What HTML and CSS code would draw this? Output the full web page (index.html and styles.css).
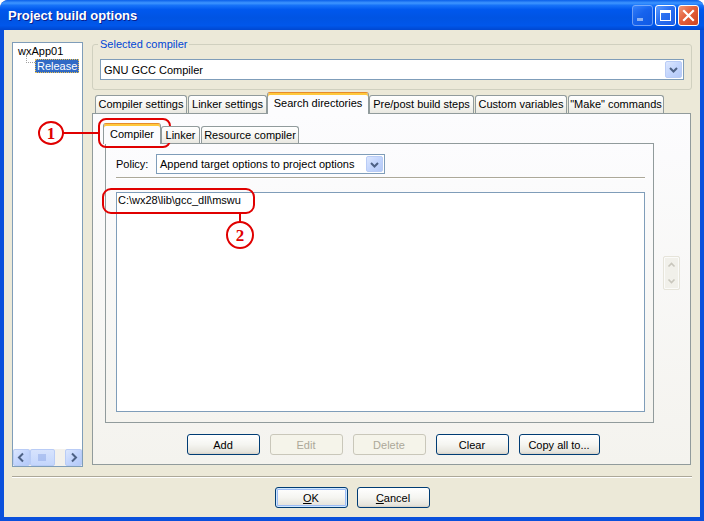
FILE: index.html
```html
<!DOCTYPE html>
<html>
<head>
<meta charset="utf-8">
<link rel="stylesheet" href="styles.css">
</head>
<body>
<div class="window">
  <div class="titlebar">
    <span class="title">Project build options</span>
    <div class="caps">
      <span class="cap cap-min"><i class="min-glyph"></i></span>
      <span class="cap cap-max"><i class="max-glyph"></i></span>
      <span class="cap cap-close"><svg width="13" height="13" viewBox="0 0 13 13"><path d="M2 2 L11 11 M11 2 L2 11" stroke="#fff" stroke-width="2.2" stroke-linecap="square"/></svg></span>
    </div>
  </div>
  <div class="client">
    <div class="main">
      <div class="tree">
        <div class="tree-items">
          <div class="node root">wxApp01</div>
          <div class="node child"><span class="conn"></span><span class="sel">Release</span></div>
        </div>
        <div class="hscroll">
          <span class="sbtn"><svg width="15" height="15" viewBox="0 0 15 15"><path d="M9 3.5 L5 7.5 L9 11.5" fill="none" stroke="#4D6185" stroke-width="2"/></svg></span>
          <span class="thumb"><svg width="9" height="7" viewBox="0 0 9 7"><path d="M1 0 V7 M3 0 V7 M5 0 V7 M7 0 V7" stroke="#8CA6E6" stroke-width="1"/></svg></span>
          <span class="track"></span>
          <span class="sbtn"><svg width="15" height="15" viewBox="0 0 15 15"><path d="M6 3.5 L10 7.5 L6 11.5" fill="none" stroke="#4D6185" stroke-width="2"/></svg></span>
        </div>
      </div>
      <div class="right">
        <fieldset class="group">
          <legend>Selected compiler</legend>
          <div class="combo">
            <span class="combo-text">GNU GCC Compiler</span>
            <span class="combo-btn"><svg width="15" height="15" viewBox="0 0 15 15"><path d="M4 6 L7.5 9.5 L11 6" fill="none" stroke="#4D6185" stroke-width="2"/></svg></span>
          </div>
        </fieldset>
        <div class="notebook">
          <div class="tabs">
            <span class="tab t-cs">Compiler settings</span>
            <span class="tab t-ls">Linker settings</span>
            <span class="tab active t-sd">Search directories</span>
            <span class="tab t-pp">Pre/post build steps</span>
            <span class="tab t-cv">Custom variables</span>
            <span class="tab t-mc">"Make" commands</span>
          </div>
          <div class="page">
            <div class="page-row">
              <div class="inb">
                <div class="itabs">
                  <span class="itab active t-co">Compiler</span>
                  <span class="itab t-li">Linker</span>
                  <span class="itab t-rc">Resource compiler</span>
                </div>
                <div class="ipage">
                  <div class="policy-row">
                    <span class="lbl">Policy:</span>
                    <div class="combo policy">
                      <span class="combo-text">Append target options to project options</span>
                      <span class="combo-btn"><svg width="15" height="15" viewBox="0 0 15 15"><path d="M4 6 L7.5 9.5 L11 6" fill="none" stroke="#4D6185" stroke-width="2"/></svg></span>
                    </div>
                  </div>
                  <div class="hline"></div>
                  <div class="listbox">
                    <div class="item">C:\wx28\lib\gcc_dll\mswu</div>
                  </div>
                </div>
              </div>
              <div class="spin">
                <span class="spin-half"><svg width="9" height="6" viewBox="0 0 9 6"><path d="M1.5 4.5 L4.5 1.5 L7.5 4.5" fill="none" stroke="#C8C6BC" stroke-width="1.6"/></svg></span>
                <span class="spin-half"><svg width="9" height="6" viewBox="0 0 9 6"><path d="M1.5 1.5 L4.5 4.5 L7.5 1.5" fill="none" stroke="#C8C6BC" stroke-width="1.6"/></svg></span>
              </div>
            </div>
            <div class="btnrow">
              <button class="btn">Add</button>
              <button class="btn" disabled>Edit</button>
              <button class="btn" disabled>Delete</button>
              <button class="btn">Clear</button>
              <button class="btn wide">Copy all to...</button>
            </div>
          </div>
        </div>
      </div>
    </div>
    <div class="sep"></div>
    <div class="dlg-btns">
      <button class="btn default"><u>O</u>K</button>
      <button class="btn"><u>C</u>ancel</button>
    </div>
  </div>
  <svg class="annot" width="704" height="521" viewBox="0 0 704 521">
    <g fill="none" stroke="#E00000" stroke-width="2">
      <ellipse cx="51" cy="133" rx="12" ry="11"/>
      <line x1="63" y1="133" x2="99" y2="133"/>
      <rect x="99" y="119" width="71" height="28" rx="7"/>
      <rect x="103" y="189" width="151" height="24" rx="8"/>
      <line x1="240" y1="213" x2="240" y2="222"/>
      <ellipse cx="240" cy="235" rx="13" ry="13"/>
    </g>
    <text x="51" y="139" class="num">1</text>
    <text x="240" y="241" class="num">2</text>
  </svg>
</div>
</body>
</html>
```
FILE: styles.css
```css
* { box-sizing: border-box; }
body {
  margin: 0;
  font-family: "Liberation Sans", Arial, sans-serif;
  font-size: 11px;
  color: #000;
  background: #fff;
}
.window {
  position: relative;
  width: 704px;
  height: 521px;
  background: #0A50DC;
  border-radius: 8px 8px 0 0;
  display: flex;
  flex-direction: column;
  overflow: hidden;
}
.titlebar {
  height: 30px;
  display: flex;
  align-items: center;
  padding: 0 5px 0 8px;
  border-radius: 8px 8px 0 0;
  background: linear-gradient(to bottom, #0A5FEA 0%, #3E96FF 10%, #1672F8 18%, #0058EE 32%, #0054E3 60%, #0057EB 85%, #0047D0 100%);
}
.title {
  flex: 1;
  color: #fff;
  font-weight: bold;
  font-size: 13px;
  text-shadow: 1px 1px 0 #0A1E8C;
  padding-top: 1px;
}
.caps { display: flex; gap: 2px; }
.cap {
  width: 21px;
  height: 21px;
  border: 1px solid #fff;
  border-radius: 3px;
  display: flex;
  align-items: center;
  justify-content: center;
  background: linear-gradient(135deg, #5C9BFF 0%, #2A6FF0 45%, #1C5EE6 100%);
}
.cap-min {
  opacity: 0.55;
  border-color: #C8DAFF;
}
.min-glyph {
  width: 6px;
  height: 3px;
  background: #fff;
  margin-top: 9px;
  margin-left: -5px;
}
.max-glyph {
  width: 11px;
  height: 11px;
  border: 1px solid #fff;
  border-top-width: 3px;
}
.cap-close {
  background: linear-gradient(135deg, #F29878 0%, #E35F3A 45%, #CD4420 100%);
}
.client {
  flex: 1;
  margin: 0 4px 4px;
  background: #ECE9D8;
  display: flex;
  flex-direction: column;
}
.main {
  height: 437px;
  display: flex;
  padding: 8px 8px 0 8px;
  gap: 9px;
}
.tree {
  width: 71px;
  margin-top: 4px;
  border: 1px solid #7F9DB9;
  background: #fff;
  display: flex;
  flex-direction: column;
}
.tree-items {
  flex: 1;
  padding: 1px 0 0 5px;
}
.node { height: 14px; line-height: 14px; white-space: nowrap; }
.child { display: flex; align-items: flex-start; }
.conn {
  width: 9px;
  height: 8px;
  margin-left: 8px;
  margin-top: -3px;
  border-left: 1px dotted #A0A0A0;
  border-bottom: 1px dotted #A0A0A0;
}
.sel {
  background: #316AC5;
  color: #fff;
  padding: 0 1px;
  height: 14px;
  line-height: 12px;
  border: 1px dotted #E8C050;
  margin-top: 1px;
}
.hscroll {
  height: 17px;
  display: flex;
  background: #F3F1EC;
}
.sbtn, .combo-btn {
  width: 17px;
  height: 17px;
  border: 1px solid #B9CCF6;
  border-radius: 2px;
  background: linear-gradient(135deg, #DCE7FE 0%, #C3D5FD 50%, #B4C9F7 100%);
  display: flex;
  align-items: center;
  justify-content: center;
}
.thumb {
  width: 25px;
  height: 17px;
  border: 1px solid #B9CCF6;
  border-radius: 2px;
  background: linear-gradient(#D7E3FD, #C4D6FC);
  display: flex;
  align-items: center;
  justify-content: center;
}
.track { flex: 1; }
.right {
  flex: 1;
  display: flex;
  flex-direction: column;
}
.group {
  margin: 0;
  border: 1px solid #D0D0BF;
  border-radius: 3px;
  padding: 8px 7px 9px 7px;
}
.group legend {
  color: #0046D5;
  padding: 0 2px;
  margin-left: -2px;
  line-height: 13px;
}
.combo {
  height: 21px;
  display: flex;
  align-items: center;
  border: 1px solid #7F9DB9;
  background: #fff;
  padding-right: 1px;
}
.combo-text {
  flex: 1;
  padding-left: 3px;
  white-space: nowrap;
}
.notebook {
  flex: 1;
  margin: 2px 1px 2px 0;
  display: flex;
  flex-direction: column;
}
.tabs, .itabs {
  display: flex;
  align-items: flex-end;
  gap: 1px;
  position: relative;
  z-index: 1;
}
.tabs { height: 21px; padding-left: 3px; }
.itabs { height: 20px; padding-left: 0; }
.tab, .itab {
  height: 18px;
  border: 1px solid #919B9C;
  border-bottom: 0;
  border-radius: 3px 3px 0 0;
  background: linear-gradient(#FFFFFF, #F6F6F2 55%, #E9E8E1);
  text-align: center;
  line-height: 17px;
  white-space: nowrap;
}
.itab { height: 17px; line-height: 16px; }
.tab.active, .itab.active {
  height: 22px;
  margin: 0 -1px -1px -1px;
  background: #FCFCFE;
  border-top: 1px solid #E68B2C;
  box-shadow: inset 0 2px 0 #FFC83C;
  padding-top: 1px;
  line-height: 18px;
}
.itab.active { height: 21px; margin: 0 -1px -1px -2px; }
.t-cs { width: 92px; }
.t-ls { width: 79px; }
.t-sd { width: 102px; }
.t-pp { width: 105px; }
.t-cv { width: 92px; }
.t-mc { width: 96px; }
.t-co { width: 58px; }
.t-li { width: 39px; }
.t-rc { width: 98px; }
.page {
  flex: 1;
  border: 1px solid #919B9C;
  background: linear-gradient(#FCFCFE, #F4F3EE);
  padding: 9px 9px 0 12px;
  display: flex;
  flex-direction: column;
}
.page-row {
  display: flex;
  align-items: center;
  gap: 9px;
}
.inb {
  width: 549px;
  display: flex;
  flex-direction: column;
}
.ipage {
  height: 280px;
  border: 1px solid #919B9C;
  background: linear-gradient(#FCFCFE, #F5F4EF);
  padding: 10px 8px 10px 10px;
  display: flex;
  flex-direction: column;
}
.policy-row {
  display: flex;
  align-items: center;
  height: 20px;
}
.lbl { width: 40px; }
.combo.policy { width: 229px; height: 20px; }
.combo.policy .combo-btn { height: 16px; }
.hline {
  margin-top: 3px;
  height: 2px;
  border-top: 1px solid #ACA899;
  border-bottom: 1px solid #fff;
}
.listbox {
  margin-top: 13px;
  flex: 1;
  border: 1px solid #7F9DB9;
  background: #fff;
  padding: 1px;
}
.item { line-height: 13px; }
.spin {
  width: 17px;
  height: 34px;
  border: 1px solid #E6E4DA;
  border-radius: 2px;
  background: #F1F0EA;
  display: flex;
  flex-direction: column;
  box-shadow: inset 0 0 0 1px #FBFBF9;
}
.spin-half {
  flex: 1;
  display: flex;
  align-items: center;
  justify-content: center;
}
.btnrow {
  margin-top: 11px;
  display: flex;
  justify-content: center;
  gap: 10px;
}
.btn {
  width: 73px;
  height: 21px;
  font-family: "Liberation Sans", Arial, sans-serif;
  font-size: 11px;
  font-weight: normal;
  color: #000;
  border: 1px solid #003C74;
  border-radius: 3px;
  background: linear-gradient(#FFFFFF 0%, #F5F5F1 50%, #E6E4DC 90%, #D6D0C5 100%);
  padding: 0;
}
.btn.wide { width: 81px; }
.btn:disabled {
  border-color: #C9C7BA;
  background: #F5F4EA;
  color: #ACA899;
}
.btn.default {
  box-shadow: inset 0 0 0 1px #CEE7FF, inset 0 0 0 2px #9DBCF4;
}
.sep {
  margin: 9px 8px 0 8px;
  height: 2px;
  border-top: 1px solid #ACA899;
  border-bottom: 1px solid #fff;
}
.dlg-btns {
  margin-top: 9px;
  display: flex;
  justify-content: center;
  gap: 9px;
}
.annot {
  position: absolute;
  left: 0;
  top: 0;
  pointer-events: none;
}
.num {
  font-family: "Liberation Serif", serif;
  font-size: 17px;
  font-weight: bold;
  fill: #E00000;
  text-anchor: middle;
}
```
